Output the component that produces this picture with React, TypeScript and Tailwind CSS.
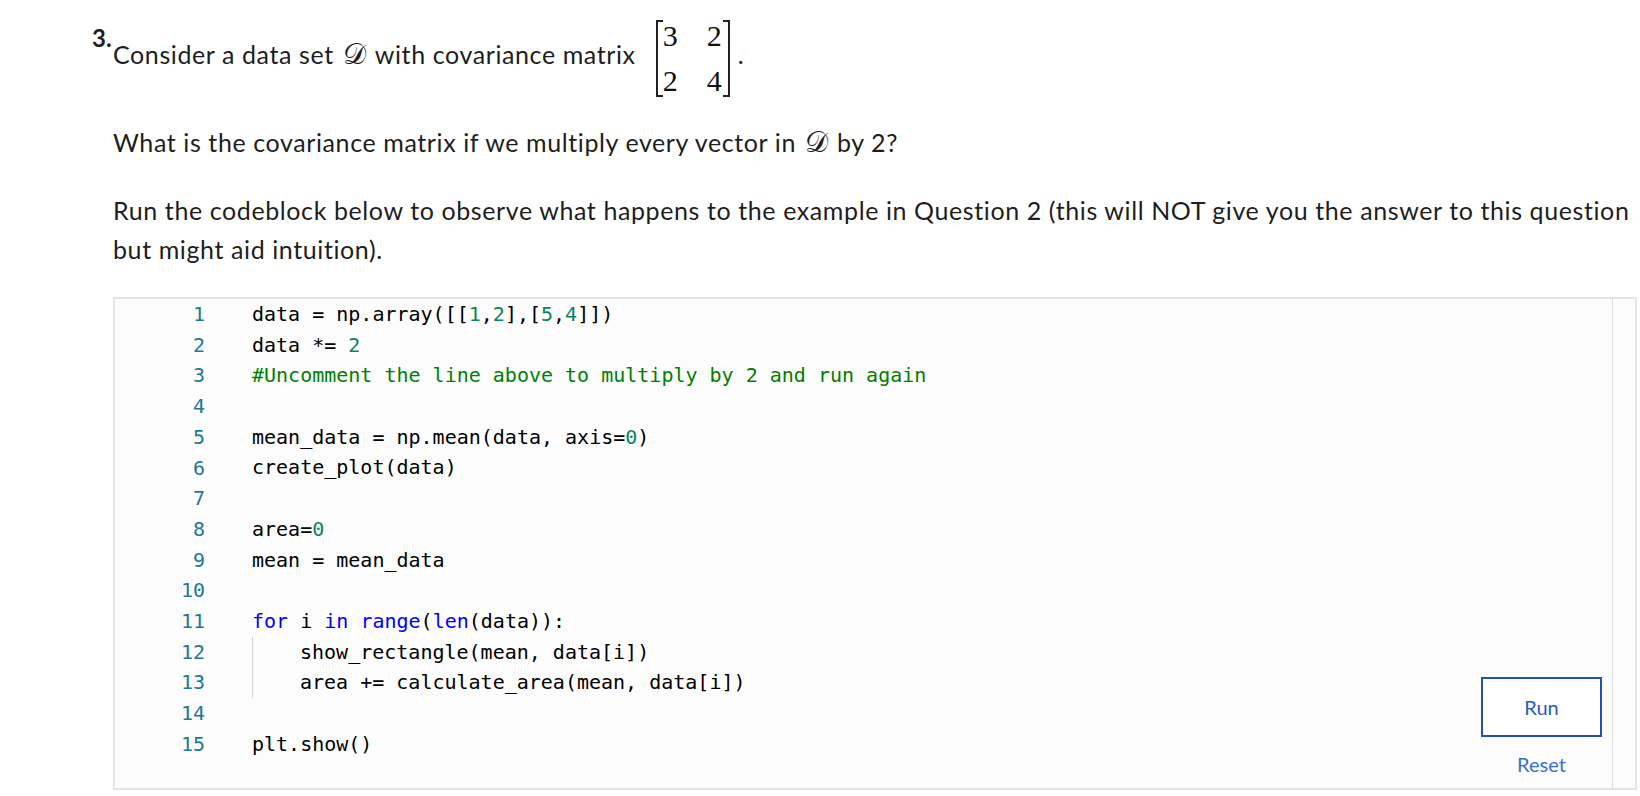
import React from "react";

type Tok = { t: string; c?: "n" | "k" | "c" };

const num = (t: string): Tok => ({ t, c: "n" });
const kw = (t: string): Tok => ({ t, c: "k" });

const lines: Tok[][] = [
  [{ t: "data = np.array([[" }, num("1"), { t: "," }, num("2"), { t: "],[" }, num("5"), { t: "," }, num("4"), { t: "]])" }],
  [{ t: "data *= " }, num("2")],
  [{ t: "#Uncomment the line above to multiply by 2 and run again", c: "c" }],
  [],
  [{ t: "mean_data = np.mean(data, axis=" }, num("0"), { t: ")" }],
  [{ t: "create_plot(data)" }],
  [],
  [{ t: "area=" }, num("0")],
  [{ t: "mean = mean_data" }],
  [],
  [kw("for"), { t: " i " }, kw("in"), { t: " " }, kw("range"), { t: "(" }, kw("len"), { t: "(data)):" }],
  [{ t: "show_rectangle(mean, data[i])" }],
  [{ t: "area += calculate_area(mean, data[i])" }],
  [],
  [{ t: "plt.show()" }],
];

const indented = new Set([11, 12]);

const tokClass = (c?: string) =>
  c === "n" ? "text-[#098658]" : c === "k" ? "text-[#0000ff]" : c === "c" ? "text-[#008000]" : "text-black";

// calligraphic D used in the question text
const CalD = () => (
  <span className="inline-block mr-[9px] ml-[2px] font-['DejaVu_Serif','Liberation_Serif',serif] text-[29px] leading-[20px] tracking-normal">
    𝒟
  </span>
);

const Matrix = () => (
  <div className="flex shrink-0 h-[77px] mt-[2px] ml-[20px] font-['Liberation_Serif',serif] text-[30px] text-[#111] tracking-normal">
    <div className="w-[7px] border-l-2 border-y-2 border-[#222]" />
    <div className="grid grid-cols-2 gap-x-[29px] gap-y-[12px] pr-[1px] leading-[32px]">
      <span>3</span>
      <span>2</span>
      <span>2</span>
      <span>4</span>
    </div>
    <div className="w-[7px] border-r-2 border-y-2 border-[#222]" />
  </div>
);

export default function App() {
  return (
    <div className="w-[1640px] h-[796px] overflow-hidden bg-white font-['Lato',sans-serif] text-[25px] tracking-[0.6px] text-[#1e1e1e] pl-[92px] pt-[18px]">
      <div className="flex">
        <span className="w-[21px] shrink-0 font-bold text-[24px] leading-[40px] tracking-normal">3.</span>
        <div className="flex-1">
          <div className="flex items-start">
            <span className="shrink-0 mt-[17px] leading-[39px]">
              Consider a data set <CalD />with covariance matrix
            </span>
            <Matrix />
            <span className="mt-[17px] leading-[39px] ml-[8px]">.</span>
          </div>

          <p className="mt-[26px] leading-[39px]">
            What is the covariance matrix if we multiply every vector in <CalD />by 2?
          </p>

          <p className="mt-[29px] leading-[39px] whitespace-nowrap">
            Run the codeblock below to observe what happens to the example in Question 2 (this will NOT give you the answer to this question
            <br />
            but might aid intuition).
          </p>

          <div className="mt-[28px] w-[1524px] h-[493px] border-2 border-[#e4e4e4] bg-[#fcfcfc] flex tracking-normal">
            <div className="w-[90px] shrink-0 text-right font-['DejaVu_Sans_Mono',monospace] text-[20px] leading-[30.7px] text-[#237893]">
              {lines.map((_, i) => (
                <div key={i}>{i + 1}</div>
              ))}
            </div>
            <div className="flex-1 pl-[47px] font-['DejaVu_Sans_Mono',monospace] text-[20px] leading-[30.7px] whitespace-pre">
              {lines.map((toks, i) => (
                <div key={i} className="flex h-[30.7px]">
                  {indented.has(i) && <span className="w-[48px] shrink-0 border-l border-[#d3d3d3]" />}
                  <span>
                    {toks.map((tk, j) => (
                      <span key={j} className={tokClass(tk.c)}>
                        {tk.t}
                      </span>
                    ))}
                  </span>
                </div>
              ))}
            </div>
            <div className="flex flex-col items-center justify-end pb-[12px] pr-[10px]">
              <button className="w-[121px] h-[60px] border-2 border-[#2152b3] text-[#2a5bbd] text-[20px] bg-white">
                Run
              </button>
              <span className="mt-[15px] text-[20px] leading-[24px] text-[#3a6fcf]">Reset</span>
            </div>
            <div className="w-[23px] shrink-0 border-l border-[#dcdcdc]" />
          </div>
        </div>
      </div>
    </div>
  );
}
